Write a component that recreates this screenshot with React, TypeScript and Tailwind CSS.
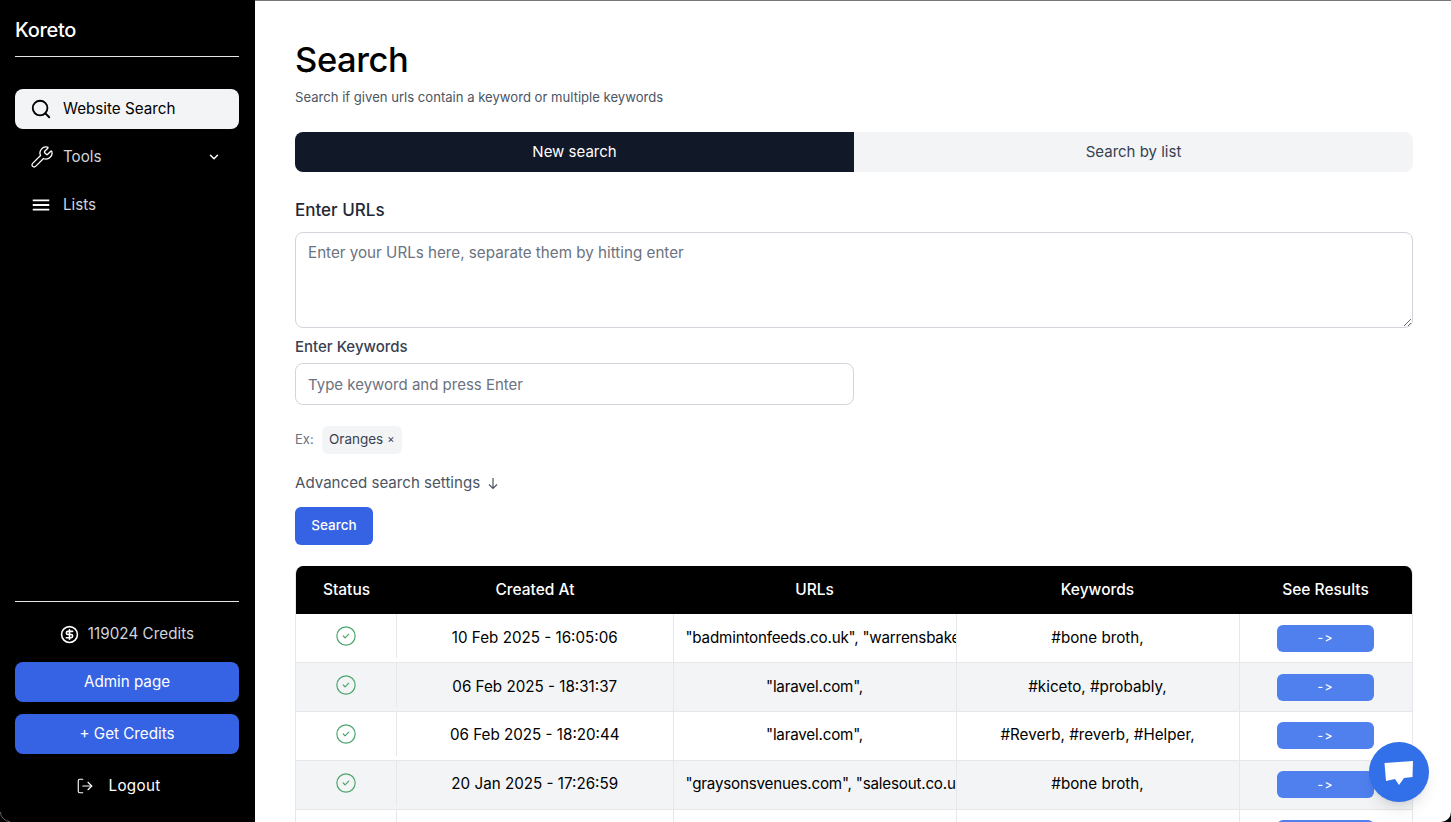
import React from "react";
import { Search, Wrench, ChevronDown, CircleDollarSign, LogOut, CircleCheck } from "lucide-react";
import { MdMenu } from "react-icons/md";

const rows = [
  ["10 Feb 2025 - 16:05:06", '"badmintonfeeds.co.uk", "warrensbakery.co.uk",', "#bone broth,"],
  ["06 Feb 2025 - 18:31:37", '"laravel.com",', "#kiceto, #probably,"],
  ["06 Feb 2025 - 18:20:44", '"laravel.com",', "#Reverb, #reverb, #Helper,"],
  ["20 Jan 2025 - 17:26:59", '"graysonsvenues.com", "salesout.co.uk",', "#bone broth,"],
  ["20 Jan 2025 - 17:20:11", '"laravel.com",', "#bone broth,"],
];

export default function App() {
  return (
    <div className="relative flex h-[822px] w-[1451px] overflow-hidden bg-white font-['Inter',sans-serif] text-black">
      <aside className="flex h-full w-[255px] shrink-0 flex-col bg-black pl-[15px] pr-4 text-white">
        <div className="flex h-[57px] items-end border-b border-[#e5e7eb] pb-[12px] text-[20px] font-medium leading-7 tracking-[-0.3px]">Koreto</div>
        <nav className="mt-8 flex flex-col gap-2 text-[15.2px]">
          <div className="flex h-10 items-center rounded-lg bg-[#f3f4f6] pl-[15px] text-black">
            <Search className="h-[22px] w-[22px]" strokeWidth={2} />
            <span className="ml-[11px]">Website Search</span>
          </div>
          <div className="flex h-10 items-center pl-[15px] pr-[18px] text-[#d1d5db]">
            <Wrench className="h-6 w-6 text-white" strokeWidth={1.3} />
            <span className="ml-[9px] flex-1">Tools</span>
            <ChevronDown className="h-[14px] w-[14px] text-white" strokeWidth={2.5} />
          </div>
          <div className="flex h-10 items-center pl-[15px] text-[#d1d5db]">
            <MdMenu className="h-[22px] w-[22px] text-white" />
            <span className="ml-[11px]">Lists</span>
          </div>
        </nav>
        <div className="mt-auto border-t border-[#e5e7eb] pb-[16px] text-[15.2px]">
          <div className="flex h-[60px] items-center justify-center gap-[9px] pt-[4px] text-[#d1d5db]">
            <CircleDollarSign className="h-[19px] w-[19px] text-white" strokeWidth={2} />
            <span className="tracking-[0.05px]">119024 Credits</span>
          </div>
          <div className="flex h-10 items-center justify-center rounded-lg bg-[#3563e3]">Admin page</div>
          <div className="mt-3 flex h-10 items-center justify-center rounded-lg bg-[#3563e3]">+ Get Credits</div>
          <div className="mt-[12px] flex h-10 items-center justify-center gap-[15px] pr-[18px]">
            <LogOut className="h-[18px] w-[18px]" strokeWidth={1.5} />
            <span className="tracking-[0.3px]">Logout</span>
          </div>
        </div>
      </aside>
      <main className="min-w-0 flex-1 border-t border-[#777] px-10 pt-[39px]">
        <h1 className="text-[34.5px] font-medium leading-10 tracking-[-0.4px]">Search</h1>
        <p className="mt-[7px] text-[13.1px] leading-5 text-[#4b5563]">Search if given urls contain a keyword or multiple keywords</p>
        <div className="mt-[25px] flex h-10 w-[1118px] overflow-hidden rounded-lg text-[15px]">
          <div className="flex flex-1 items-center justify-center bg-[#111827] text-white">New search</div>
          <div className="flex flex-1 items-center justify-center bg-[#f3f4f6] text-[#374151]">Search by list</div>
        </div>
        <h2 className="mt-[26px] text-[17px] font-medium leading-6 text-[#1f2937]">Enter URLs</h2>
        <textarea
          readOnly
          placeholder="Enter your URLs here, separate them by hitting enter"
          className="mt-[10px] block h-[96px] w-[1118px] rounded-lg border border-[#d1d5db] px-3 py-[8px] text-[15.2px] leading-6 placeholder:text-[#6b7280]"
        />
        <label className="mt-[7px] block text-[15px] font-medium leading-6 text-[#374151]">Enter Keywords</label>
        <input
          readOnly
          placeholder="Type keyword and press Enter"
          className="mt-[4px] block h-[42px] w-[559px] rounded-lg border border-[#d1d5db] px-3 text-[15px] placeholder:text-[#6b7280]"
        />
        <div className="mt-[21px] flex h-7 items-center">
          <span className="w-[27px] pb-[1px] text-[13px] text-[#6b7280]">Ex:</span>
          <span className="flex h-7 items-center rounded-md bg-[#f3f4f6] pb-[1px] pl-[7px] pr-[7px] text-[13.5px] text-[#374151]">
            Oranges<span className="ml-[4px] text-[11px]">×</span>
          </span>
        </div>
        <div className="mt-[17px] flex h-6 items-center text-[15.1px] text-[#4b5563]">
          Advanced search settings
          <svg viewBox="0 0 10 13" className="ml-[8px] h-[13px] w-[10px]" fill="none" stroke="currentColor" strokeWidth="1.2"><path d="M5 1 V11.5 M1 7.5 L5 11.5 L9 7.5" /></svg>
        </div>
        <button className="mt-[12px] flex h-[38px] w-[78px] items-center justify-center rounded-md bg-[#3563e3] pb-[1px] text-[13.5px] font-medium text-white">Search</button>
        <div className="mt-[21px] w-[1118px] overflow-hidden rounded-t-lg border-x border-[#e5e7eb]">
          <table className="w-full table-fixed border-collapse text-[15.2px]">
            <colgroup>
              <col className="w-[101px]" />
              <col className="w-[276px]" />
              <col className="w-[283px]" />
              <col className="w-[283px]" />
              <col />
            </colgroup>
            <thead>
              <tr className="h-12 bg-black text-[15.5px] text-white">
                {["Status", "Created At", "URLs", "Keywords", "See Results"].map((h) => (
                  <th key={h} className="font-medium">{h}</th>
                ))}
              </tr>
            </thead>
            <tbody>
              {rows.map((r, i) => (
                <tr key={i} className={`h-[48.75px] border-b border-[#e5e7eb] ${i % 2 ? "bg-[#f3f4f6]" : "bg-white"}`}>
                  <td className="p-0 align-top">
                    <div className="flex h-[44px] items-center justify-center border-r border-[#e5e7eb]">
                      <CircleCheck className="h-[22px] w-[22px] text-[#4ca66c]" strokeWidth={1.3} />
                    </div>
                  </td>
                  <td className="border-r border-[#e5e7eb] text-center">{r[0]}</td>
                  <td className="border-r border-[#e5e7eb] pl-3 text-center tracking-[-0.2px]"><div className={`overflow-hidden whitespace-nowrap ${r[1].length > 20 ? "text-left" : "pr-3"}`}>{r[1]}</div></td>
                  <td className="border-r border-[#e5e7eb] text-center">{r[2]}</td>
                  <td>
                    <button className="mx-auto flex h-[27px] w-[97px] items-center justify-center rounded-md bg-[#4f80ee] text-[12px] font-medium tracking-[1.5px] text-white">-&gt;</button>
                  </td>
                </tr>
              ))}
            </tbody>
          </table>
        </div>
      </main>
      <div className="absolute left-[1369px] top-[742px] flex h-[60px] w-[60px] items-center justify-center rounded-full bg-[#3170e8] shadow-lg">
        <svg viewBox="0 0 30 26" className="h-[26px] w-[30px]" fill="white"><path d="M0.5 4 L29 2 L28.5 18 L20 19 L15 26 L11 20 L2 22 Z" /></svg>
      </div>
      <svg viewBox="0 0 10 10" className="absolute bottom-0 left-0 h-[10px] w-[10px]" fill="none" stroke="#666" strokeWidth="1"><path d="M0.5 0 A9.5 9.5 0 0 0 10 9.5" /></svg>
      <svg viewBox="0 0 10 10" className="absolute bottom-0 right-0 h-[10px] w-[10px]" fill="black"><path d="M10 0 A10 10 0 0 1 0 10 L10 10 Z" /></svg>
    </div>
  );
}
